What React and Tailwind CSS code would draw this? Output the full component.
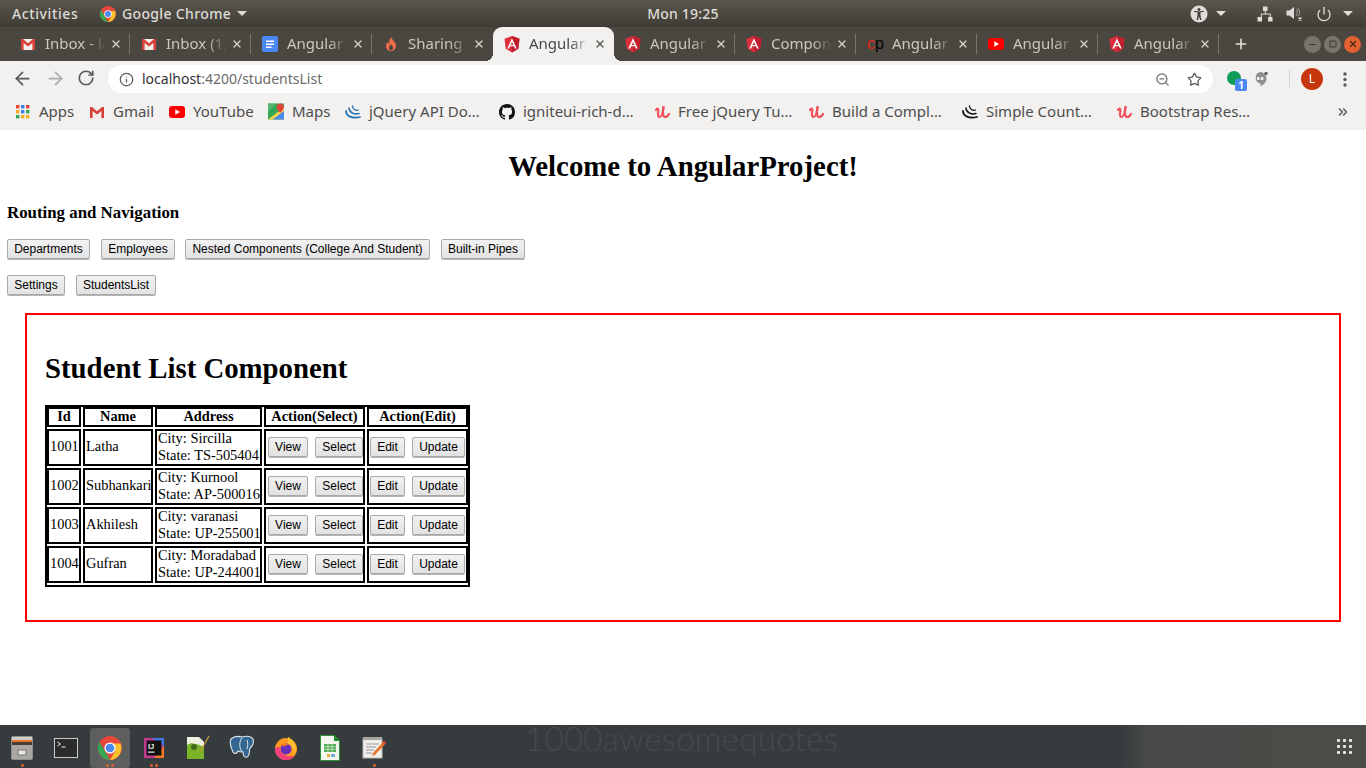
import React from 'react';
import { X, ArrowLeft, ArrowRight, RotateCw, Info, ZoomOut, Star, Plus, Minus, Square, Power, ChevronsRight } from 'lucide-react';

const GmailIcon = ({ s = 16 }) => (
  <svg width={s} height={s} viewBox="0 0 16 16">
    <rect x="1" y="3" width="14" height="11" fill="#f1efec" />
    <path d="M1 3h2l5 4.2L13 3h2v11h-2.6V7L8 10.6 3.6 7v7H1z" fill="#d8403a" />
  </svg>
);

const DocsIcon = () => (
  <svg width="16" height="16" viewBox="0 0 16 16">
    <rect width="16" height="16" rx="2" fill="#4a88f2" />
    <path d="M4 4.5h8v1.4H4zM4 7.5h8v1.4H4zM4 10.5h5.5v1.4H4z" fill="#fff" />
  </svg>
);

const FireIcon = () => (
  <svg width="16" height="16" viewBox="0 0 16 16">
    <path d="M8 1c.6 2.6 4.800 4.400 5 8.500C13.100 13 10.600 15 8 15s-5.200-2-5-5.300c.1-1.900 1.200-3.100 2-4 .2 1.100.6 1.800 1.300 2.300C6 5.500 6.500 3 8 1z" fill="#ef6a46" />
    <path d="M8 8c.4 1.300 2 2.100 2 3.900C10 13.200 9 14 8 14s-2-.8-2-2.100C6 10.400 7.500 9.500 8 8z" fill="#47433d" />
  </svg>
);

const AngularIcon = () => (
  <svg width="16" height="17" viewBox="0 0 16 17">
    <path d="M8 0L.5 2.700l1.200 10L8 16.500l6.300-3.800 1.200-10z" fill="#dd2f3b" />
    <path d="M8 0v16.500l6.300-3.800 1.200-10z" fill="#c11f2d" />
    <path d="M8 2.200L3.300 12.500h1.800l.9-2.300h4l.9 2.300h1.800zM8 6l1.400 2.900H6.600z" fill="#fff" />
  </svg>
);

const YoutubeIcon = () => (
  <svg width="16" height="12" viewBox="0 0 16 12">
    <rect width="16" height="12" rx="3" fill="#f00" />
    <path d="M6.300 3.200v5.600L11 6z" fill="#fff" />
  </svg>
);

const CpIcon = () => (
  <span className="flex w-4 text-[16px] leading-none font-['Liberation_Sans',sans-serif]">
    <span className="text-[#e8261c]">c</span>
    <span className="text-black">p</span>
  </span>
);

const TAB_ICONS = {
  gmail: <GmailIcon />,
  docs: <DocsIcon />,
  fire: <FireIcon />,
  angular: <AngularIcon />,
  cp: <CpIcon />,
  youtube: <YoutubeIcon />,
};

const tabs = [
  { icon: 'gmail', title: 'Inbox - la' },
  { icon: 'gmail', title: 'Inbox (1,' },
  { icon: 'docs', title: 'Angular' },
  { icon: 'fire', title: 'Sharing' },
  { icon: 'angular', title: 'Angular', active: true },
  { icon: 'angular', title: 'Angular' },
  { icon: 'angular', title: 'Compon' },
  { icon: 'cp', title: 'Angular' },
  { icon: 'youtube', title: 'Angular' },
  { icon: 'angular', title: 'Angular' },
];

const Tab = ({ icon, title, active, noSep }) => (
  <div className={`relative w-[121px] h-full shrink-0 flex items-center pl-[11px] ${active ? 'bg-[#f2f1f0] rounded-t-[9px] text-[#4a4a48]' : 'text-[#c9c7c0]'}`}>
    {active && <span className="absolute -left-2 bottom-0 w-2 h-2 bg-[radial-gradient(circle_at_0_0,transparent_8px,#f2f1f0_8px)]" />}
    {active && <span className="absolute -right-2 bottom-0 w-2 h-2 bg-[radial-gradient(circle_at_100%_0,transparent_8px,#f2f1f0_8px)]" />}
    <span className="w-4 h-4 flex items-center justify-center shrink-0">{TAB_ICONS[icon]}</span>
    <span className="ml-[9px] w-[64px] pb-[2px] overflow-hidden whitespace-nowrap text-[15px] [mask-image:linear-gradient(90deg,#000_65%,transparent_95%)]">{title}</span>
    <X className="ml-px shrink-0" size={12} strokeWidth={2.4} color={active ? '#55534f' : '#d8d6d0'} />
    {!noSep && <span className="ml-auto w-px h-5 bg-[#77746c]" />}
  </div>
);

const AppsIcon = () => (
  <svg width="14" height="14" viewBox="0 0 14 14">
    {[0, 5, 10].map((y, r) =>
      [0, 5, 10].map((x, c) => (
        <rect key={`${r}${c}`} x={x} y={y} width="3.400" height="3.400" fill={['#e0463a', '#3f7fe8', '#e0463a', '#f2b01e', '#3f7fe8', '#35a853', '#35a853', '#f2b01e', '#f2b01e'][r * 3 + c]} />
      ))
    )}
  </svg>
);

const MapsIcon = () => (
  <svg width="17" height="17" viewBox="0 0 17 17">
    <rect width="17" height="17" fill="#35a853" />
    <path d="M0 17L17 4v13z" fill="#f3d34a" />
    <path d="M5 17L17 8v9z" fill="#4a88f2" />
    <path d="M0 0h9L0 9z" fill="#58b56d" />
    <path d="M13 0a3.800 3.800 0 0 1 3.800 3.800C16.800 6.500 13 10 13 10S9.200 6.500 9.200 3.800A3.800 3.800 0 0 1 13 0z" fill="#e0463a" />
  </svg>
);

const JqueryIcon = ({ color = '#1f6fb5' }) => (
  <svg width="16" height="16" viewBox="0 0 16 16" fill="none" stroke={color} strokeLinecap="round">
    <path d="M1 7c0 5 6 8 14 6" strokeWidth="1.800" />
    <path d="M4 4c0 4 5 7 10 5.500" strokeWidth="1.500" />
    <path d="M7.500 2c0 3 3 5 6 4" strokeWidth="1.300" />
  </svg>
);

const GithubIcon = () => (
  <svg width="16" height="16" viewBox="0 0 16 16" fill="#111">
    <path d="M8 0C3.580 0 0 3.580 0 8c0 3.540 2.290 6.530 5.470 7.590.4.070.55-.17.55-.38 0-.19-.01-.82-.01-1.490-2.010.37-2.530-.49-2.690-.94-.09-.23-.48-.94-.82-1.130-.28-.15-.68-.52-.01-.53.630-.01 1.080.58 1.230.82.720 1.210 1.870.87 2.330.66.070-.52.280-.87.510-1.070-1.780-.2-3.640-.89-3.640-3.950 0-.87.310-1.590.82-2.150-.08-.2-.36-1.020.08-2.120 0 0 .67-.21 2.200.82.640-.18 1.320-.27 2-.27s1.360.09 2 .27c1.530-1.040 2.200-.82 2.200-.82.44 1.100.16 1.920.08 2.120.51.56.82 1.270.82 2.150 0 3.070-1.870 3.750-3.650 3.950.29.25.54.73.54 1.480 0 1.070-.01 1.930-.01 2.200 0 .21.150.46.550.38A8.010 8.010 0 0 0 16 8c0-4.420-3.580-8-8-8z" />
  </svg>
);

const UdemyIcon = () => (
  <svg width="15" height="14" viewBox="0 0 15 14" fill="none" stroke="#f0525a" strokeWidth="2.200" strokeLinecap="round">
    <path d="M1 5c1-2 2.500-2 2.300.6C3 8 2.500 12 4.500 12S8 7 8.500 2" />
    <path d="M8.500 2c-.8 4-1 10 1.500 10 1.500 0 3-1 4-3" />
  </svg>
);

const bookmarks = [
  { w: 'w-[74px]', icon: <AppsIcon />, label: 'Apps' },
  { w: 'w-[80px]', icon: <GmailIcon />, label: 'Gmail' },
  { w: 'w-[99px]', icon: <YoutubeIcon />, label: 'YouTube' },
  { w: 'w-[77px]', icon: <MapsIcon />, label: 'Maps' },
  { w: 'w-[154px]', icon: <JqueryIcon />, label: 'jQuery API Do…' },
  { w: 'w-[155px]', icon: <GithubIcon />, label: 'igniteui-rich-d…' },
  { w: 'w-[154px]', icon: <UdemyIcon />, label: 'Free jQuery Tu…' },
  { w: 'w-[154px]', icon: <UdemyIcon />, label: 'Build a Compl…' },
  { w: 'w-[154px]', icon: <JqueryIcon color="#111" />, label: 'Simple Count…' },
  { w: 'w-[220px]', icon: <UdemyIcon />, label: 'Bootstrap Res…' },
];

const AccessIcon = () => (
  <svg width="18" height="18" viewBox="0 0 18 18">
    <circle cx="9" cy="9" r="8.500" fill="#dedcd6" />
    <circle cx="9" cy="4.600" r="1.500" fill="#45423b" />
    <path d="M4 6.800l3.500.8v3l-1 4.400h1.400L9 11.500l1.100 3.500h1.400l-1-4.400v-3l3.500-.8-.3-1.100L9 6.500 4.300 5.700z" fill="#45423b" />
  </svg>
);

const NetworkIcon = () => (
  <svg width="16" height="16" viewBox="0 0 16 16" fill="#dedcd6">
    <rect x="6" y="0.500" width="4.500" height="4.500" />
    <rect x="0.500" y="11" width="4.500" height="4.500" />
    <rect x="11" y="11" width="4.500" height="4.500" />
    <path d="M7.800 5h1v2.500h5V11h-1V8.500h-8V11h-1V7.500h4z" />
  </svg>
);

const VolumeIcon = () => (
  <svg width="17" height="17" viewBox="0 0 17 17" fill="none" stroke="#dedcd6">
    <path d="M0.500 5.500h3L8 2v12L3.500 10.500h-3z" fill="#dedcd6" stroke="none" />
    <path d="M10 5a4 4 0 0 1 0 6M11.500 3a6.500 6.500 0 0 1 1 8" stroke="#8a8880" strokeWidth="1.200" />
    <path d="M12.500 12.500l3 3M15.500 12.500l-3 3" strokeWidth="1.300" />
  </svg>
);

const Caret = () => <span className="block w-0 h-0 border-x-[5px] border-x-transparent border-t-[5px] border-t-[#dedcd6]" />;

const ChromeIcon = ({ s = 16 }) => (
  <svg width={s} height={s} viewBox="0 0 32 32">
    <circle cx="16" cy="16" r="16" fill="#e8453c" />
    <path d="M16 32A16 16 0 0 1 2.100 8L9 20l7 12z" fill="#35a853" />
    <path d="M16 32l7-12-7-10h14a16 16 0 0 1-14 22z" fill="#fbc02d" />
    <circle cx="16" cy="16" r="7.500" fill="#fff" />
    <circle cx="16" cy="16" r="5.800" fill="#4a88f2" />
  </svg>
);

const FilesIcon = () => (
  <svg width="24" height="26" viewBox="0 0 24 26">
    <rect x="1" y="1" width="22" height="24" rx="2" fill="#8f8f8b" />
    <rect x="2" y="2" width="20" height="3" fill="#d0cfca" />
    <rect x="2" y="5" width="20" height="2" fill="#e8752f" />
    <rect x="2" y="7" width="20" height="3" fill="#4a3d33" />
    <rect x="2" y="10" width="20" height="14" fill="#a9a8a4" />
    <rect x="8" y="15" width="8" height="5" fill="#e8e7e3" stroke="#666" strokeWidth="0.800" />
  </svg>
);

const TerminalIcon = () => (
  <svg width="24" height="20" viewBox="0 0 24 20">
    <rect x="0.500" y="0.500" width="23" height="19" fill="#2c2c2c" stroke="#c9c9c6" />
    <path d="M3.500 4l3 2-3 2" fill="none" stroke="#eee" strokeWidth="1" />
    <path d="M7.500 9h4" stroke="#eee" strokeWidth="1" />
  </svg>
);

const IdeaIcon = () => (
  <svg width="20" height="20" viewBox="0 0 20 20">
    <rect width="20" height="20" fill="#c23a8e" />
    <path d="M0 0h20v8L8 0z" fill="#3d7be8" />
    <path d="M20 8v12H10z" fill="#f27a2a" />
    <rect x="2.500" y="2.500" width="15" height="15" fill="#111" />
    <rect x="4" y="13.500" width="6.500" height="1.200" fill="#eee" />
    <text x="4" y="10.500" fontSize="7.500" fontWeight="700" fill="#eee" fontFamily="Liberation Sans, sans-serif">IJ</text>
  </svg>
);

const GeanyIcon = () => (
  <svg width="24" height="26" viewBox="0 0 24 26">
    <path d="M1 2h12l5 5v17H1z" fill="#eef0df" />
    <path d="M1 10c5-4 12 0 17 2v12H1z" fill="#7bb428" />
    <circle cx="8" cy="12" r="3" fill="#3f6c1a" />
    <path d="M14 17L23 1" stroke="#c59a3a" strokeWidth="1.300" />
  </svg>
);

const PostgresIcon = () => (
  <svg width="26" height="26" viewBox="0 0 26 26">
    <path d="M2 4c3-3 7-3 11-2 4-1 9-1 11 2 1 3 0 7-3 9-1 3 0 8-3 9-3 1-4-2-4-5-2 0-4 0-5-1-1 3-4 3-5 1-2-4-4-9-2-13z" fill="#336791" stroke="#e4e9ee" strokeWidth="1.100" />
    <path d="M13 3c-3 4-3 9 0 14M18 5c1 3 1 6 0 9" fill="none" stroke="#e4e9ee" strokeWidth="1" />
  </svg>
);

const FirefoxIcon = () => (
  <svg width="24" height="24" viewBox="0 0 24 24">
    <circle cx="12" cy="13" r="11" fill="#ff9a1f" />
    <path d="M1 13a11 11 0 0 0 20 6.500C15 22 6 19 5.500 11 3 11 1.500 11 1 13z" fill="#ef3f7c" />
    <path d="M14 1c4 2 8 6 8 12 0 2-1 4-2 5 0-6-3-8-6-10z" fill="#ffbc2c" />
    <circle cx="12" cy="13" r="5.500" fill="#6b2fbd" />
    <path d="M6 9c3-2 8-2 10 0-3-.5-4 0-5 1.500C9 10 7.500 9.500 6 9z" fill="#ff7a1f" />
  </svg>
);

const CalcIcon = () => (
  <svg width="20" height="26" viewBox="0 0 20 26">
    <path d="M0.500 0.500h14l5 5v20H0.500z" fill="#f4f7f0" stroke="#2f8f35" />
    <path d="M14 0l6 6h-6z" fill="#1f8a2a" />
    <rect x="4" y="9" width="12" height="8" fill="#4fae56" />
    <path d="M4 11.700h12M4 14.300h12M8 9v8M12 9v8" stroke="#f4f7f0" strokeWidth="0.600" />
    <rect x="7" y="19" width="3" height="3" fill="#e3b23c" />
    <rect x="11" y="19" width="4" height="3" fill="#6fa8dc" />
  </svg>
);

const NotesIcon = () => (
  <svg width="25" height="24" viewBox="0 0 25 24">
    <rect x="1" y="3" width="19" height="19" fill="#f1f0ec" stroke="#b8b7b2" />
    <rect x="1" y="1" width="19" height="3" fill="#a6a5a0" />
    <path d="M4 8h13M4 11h10M4 14h8M4 17h6" stroke="#999" />
    <path d="M11 17L22 5l2 2-11 12-3 1z" fill="#e8752f" />
    <path d="M20.500 6.500L22 5l2 2-1.500 1.500z" fill="#d8403a" />
  </svg>
);

const dockItems = [
  { icon: <FilesIcon />, dots: 1 },
  { icon: <TerminalIcon />, dots: 0 },
  { icon: <ChromeIcon s={24} />, dots: 2, active: true },
  { icon: <IdeaIcon />, dots: 2 },
  { icon: <GeanyIcon />, dots: 0 },
  { icon: <PostgresIcon />, dots: 0 },
  { icon: <FirefoxIcon />, dots: 0 },
  { icon: <CalcIcon />, dots: 0 },
  { icon: <NotesIcon />, dots: 1 },
];

const Btn = ({ children, className = '' }) => (
  <button className={`h-5 px-0 whitespace-nowrap border border-[#a9a9a9] rounded-[2px] bg-[linear-gradient(#f2f2f2,#e2e2e2)] shadow-[0_1px_0_#b5b5b5] text-[12px] leading-none text-black font-['Liberation_Sans',sans-serif] ${className}`}>
    {children}
  </button>
);

const students = [
  { id: 1001, name: 'Latha', city: 'Sircilla', state: 'TS-505404' },
  { id: 1002, name: 'Subhankari', city: 'Kurnool', state: 'AP-500016' },
  { id: 1003, name: 'Akhilesh', city: 'varanasi', state: 'UP-255001' },
  { id: 1004, name: 'Gufran', city: 'Moradabad', state: 'UP-244001' },
];

const cellCls = 'border-2 border-black p-0';

export default function App() {
  return (
    <div className="h-screen w-full overflow-hidden flex flex-col bg-white font-['Noto_Sans',sans-serif]">
      {/* gnome top bar */}
      <div className="h-[27px] shrink-0 flex items-center bg-[linear-gradient(#5a564d,#3f3c36)] text-[#dedcd6] text-[14px] font-medium">
        <span className="ml-3 w-[88px] tracking-[0.6px]">Activities</span>
        <ChromeIcon />
        <span className="ml-[6px] tracking-[0.35px]">Google Chrome</span>
        <span className="ml-[6px]"><Caret /></span>
        <span className="ml-[400px] w-[71px] whitespace-nowrap tracking-[0.2px]">Mon 19:25</span>
        <div className="ml-[472px]"><AccessIcon /></div>
        <span className="ml-2"><Caret /></span>
        <div className="ml-[31px]"><NetworkIcon /></div>
        <div className="ml-[13px]"><VolumeIcon /></div>
        <Power className="ml-[13px]" size={16} strokeWidth={2} />
        <span className="ml-[11px]"><Caret /></span>
      </div>

      {/* tab strip */}
      <div className="h-[34px] shrink-0 flex items-center pl-[9px] bg-[#4a4740]">
        {tabs.map((t, i) => (
          <Tab key={i} {...t} noSep={t.active || i === 3} />
        ))}
        <Plus className="ml-[14px]" size={16} strokeWidth={2.4} color="#e5e3dd" />
        <div className="ml-[55px] flex gap-[3px]">
          <span className="w-[17px] h-[17px] rounded-full bg-[#77746c] flex items-center justify-center"><Minus size={9} color="#33312c" strokeWidth={3} /></span>
          <span className="w-[17px] h-[17px] rounded-full bg-[#77746c] flex items-center justify-center"><Square size={8} color="#33312c" strokeWidth={2.500} /></span>
          <span className="w-[17px] h-[17px] rounded-full bg-[#e2622f] flex items-center justify-center"><X size={10} color="#4a2413" strokeWidth={3} /></span>
        </div>
      </div>

      {/* toolbar */}
      <div className="h-8 shrink-0 flex items-start pt-1 bg-[#f2f1f0]">
        <ArrowLeft className="ml-[12px] mt-[3px]" size={21} color="#5a5a5a" strokeWidth={2} />
        <ArrowRight className="ml-[12px] mt-[3px]" size={21} color="#adadad" strokeWidth={2} />
        <RotateCw className="ml-[11px] mt-[4px]" size={18} color="#5a5a5a" strokeWidth={2.200} />
        <div className="ml-[13px] w-[1105px] h-7 bg-white rounded-full flex items-center text-[14px] text-[#6b6b6b]">
          <Info className="ml-[11px]" size={15} color="#5a5a5a" strokeWidth={2} />
          <span className="ml-2 pb-px"><span className="text-[#333]">localhost</span>:4200/studentsList</span>
          <ZoomOut className="ml-auto" size={15} color="#6b6b6b" strokeWidth={2} />
          <Star className="ml-[17px] mr-[11px]" size={15} color="#5a5a5a" strokeWidth={2} />
        </div>
        <div className="relative ml-[14px] mt-[6px] w-[14px] h-[14px] rounded-full bg-[#0f9d58]">
          <span className="absolute left-2 top-2 w-3 h-3 rounded-[2px] bg-[#4a88f2] text-white text-[10px] leading-3 text-center font-bold">1</span>
        </div>
        <svg className="ml-[12px] mt-[6px]" width="15" height="17" viewBox="0 0 15 17">
          <path d="M7 1a6.500 6.500 0 0 1 6.500 6.500c0 3.500-3 6.500-6 8v-3H7A6 6 0 0 1 7 1z" fill="#8f8f8f" />
          <path d="M4 6h2.500v3H4zM7.800 6h2.500v3H7.800z" fill="#f2f1f0" />
          <circle cx="13" cy="2.500" r="1.800" fill="#666" />
        </svg>
        <span className="ml-[21px] mt-[5px] w-px h-[17px] bg-[#d6d5d3]" />
        <div className="ml-[11px] mt-[3px] w-[22px] h-[22px] rounded-full bg-[#c5360c] text-white text-[12px] leading-[22px] text-center">L</div>
        <svg className="ml-[20px] mt-[7px]" width="4" height="15" viewBox="0 0 4 15" fill="#5a5a5a">
          <circle cx="2" cy="2" r="1.700" /><circle cx="2" cy="7.500" r="1.700" /><circle cx="2" cy="13" r="1.700" />
        </svg>
      </div>

      {/* bookmarks bar */}
      <div className="h-[37px] shrink-0 flex items-center pl-[15px] bg-[#f2f1f0] text-[15px] text-[#4d4d4d]">
        {bookmarks.map((b, i) => (
          <div key={i} className={`${b.w} shrink-0 flex items-center whitespace-nowrap`}>
            <span className="w-4 flex justify-center shrink-0">{b.icon}</span>
            <span className="ml-2">{b.label}</span>
          </div>
        ))}
        <ChevronsRight size={14} color="#555" strokeWidth={2.500} />
      </div>

      {/* page */}
      <div className="flex-1 min-h-0 font-['Liberation_Serif',serif] text-black">
        <h1 className="mt-5 text-center text-[28.8px] leading-[32px] font-bold">Welcome to AngularProject!</h1>
        <h3 className="mt-[21px] ml-[7px] text-[16.85px] leading-[20px] font-bold">Routing and Navigation</h3>
        <div className="mt-4 ml-[7px] flex">
          <Btn className="w-[83px]">Departments</Btn>
          <Btn className="w-[74px] ml-[11px]">Employees</Btn>
          <Btn className="w-[245px] ml-[10px]">Nested Components (College And Student)</Btn>
          <Btn className="w-[84px] ml-[11px]">Built-in Pipes</Btn>
        </div>
        <div className="mt-[16px] ml-[7px] flex">
          <Btn className="w-[58px]">Settings</Btn>
          <Btn className="w-[80px] ml-[11px]">StudentsList</Btn>
        </div>

        <div className="mt-[18px] mx-[25px] h-[309px] border-2 border-[#ff0000] pl-[18px]">
          <h2 className="mt-[35px] text-[28.8px] leading-[36px] font-bold">Student List Component</h2>
          <table className="mt-[19px] w-[425px] table-fixed border-separate border-spacing-[2px] border-b-2 border-black shadow-[inset_2px_2px_0_#000,inset_-2px_0_0_#000] text-[14.4px] leading-[16.5px]">
            <colgroup>
              <col className="w-[34px]" />
              <col className="w-[70px]" />
              <col className="w-[107px]" />
              <col className="w-[101px]" />
              <col className="w-[101px]" />
            </colgroup>
            <thead>
              <tr className="h-5">
                {['Id', 'Name', 'Address', 'Action(Select)', 'Action(Edit)'].map((h) => (
                  <th key={h} className={`${cellCls} font-bold text-center leading-4 align-top`}>
                    <div className="-mt-px h-4">{h}</div>
                  </th>
                ))}
              </tr>
            </thead>
            <tbody>
              {students.map((s) => (
                <tr key={s.id} className="h-[37px]">
                  <td className={`${cellCls} pl-px`}><div className="pb-[2px]">{s.id}</div></td>
                  <td className={`${cellCls} pl-px whitespace-nowrap`}><div className="pb-[2px]">{s.name}</div></td>
                  <td className={`${cellCls} pl-px align-top whitespace-nowrap`}>
                    <div className="-mt-px">City: {s.city}<br />State: {s.state}</div>
                  </td>
                  <td className={cellCls}>
                    <div className="flex pl-[2px] pb-px">
                      <Btn className="w-10">View</Btn>
                      <Btn className="w-12 ml-[7px]">Select</Btn>
                    </div>
                  </td>
                  <td className={cellCls}>
                    <div className="flex pl-px pb-px">
                      <Btn className="w-[35px]">Edit</Btn>
                      <Btn className="w-[53px] ml-[7px]">Update</Btn>
                    </div>
                  </td>
                </tr>
              ))}
            </tbody>
          </table>
        </div>
      </div>

      {/* dock */}
      <div className="h-[43px] shrink-0 flex items-center bg-[linear-gradient(90deg,#363c3e_0%,#363c3e_82%,#474a47_84%,#4c4d49_100%)]">
        {dockItems.map((d, i) => (
          <div key={i} className={d.active ? 'relative w-10 h-10 mx-[2px] mt-[3px] shrink-0 flex items-center justify-center bg-[#5c5f5d] rounded-[3px]' : 'relative w-11 h-10 mt-[3px] shrink-0 flex items-center justify-center'}>
            {d.icon}
            {d.dots > 0 && (
              <span className="absolute bottom-px left-0 right-0 flex justify-center gap-[2px]">
                {Array.from({ length: d.dots }).map((_, j) => (
                  <span key={j} className="w-[3px] h-[3px] rounded-full bg-[#e2622f]" />
                ))}
              </span>
            )}
          </div>
        ))}
        <span className="ml-[129px] -mt-[16px] text-[33px] tracking-[0.3px] leading-none font-light text-[#454a4b] font-['Lato',sans-serif] whitespace-nowrap">1000awesomequotes</span>
        <div className="ml-auto mr-[14px] grid grid-cols-3 gap-[3px]">
          {Array.from({ length: 9 }).map((_, i) => (
            <span key={i} className="w-[3px] h-[3px] bg-[#e8e8e6] rounded-[1px]" />
          ))}
        </div>
      </div>
    </div>
  );
}
